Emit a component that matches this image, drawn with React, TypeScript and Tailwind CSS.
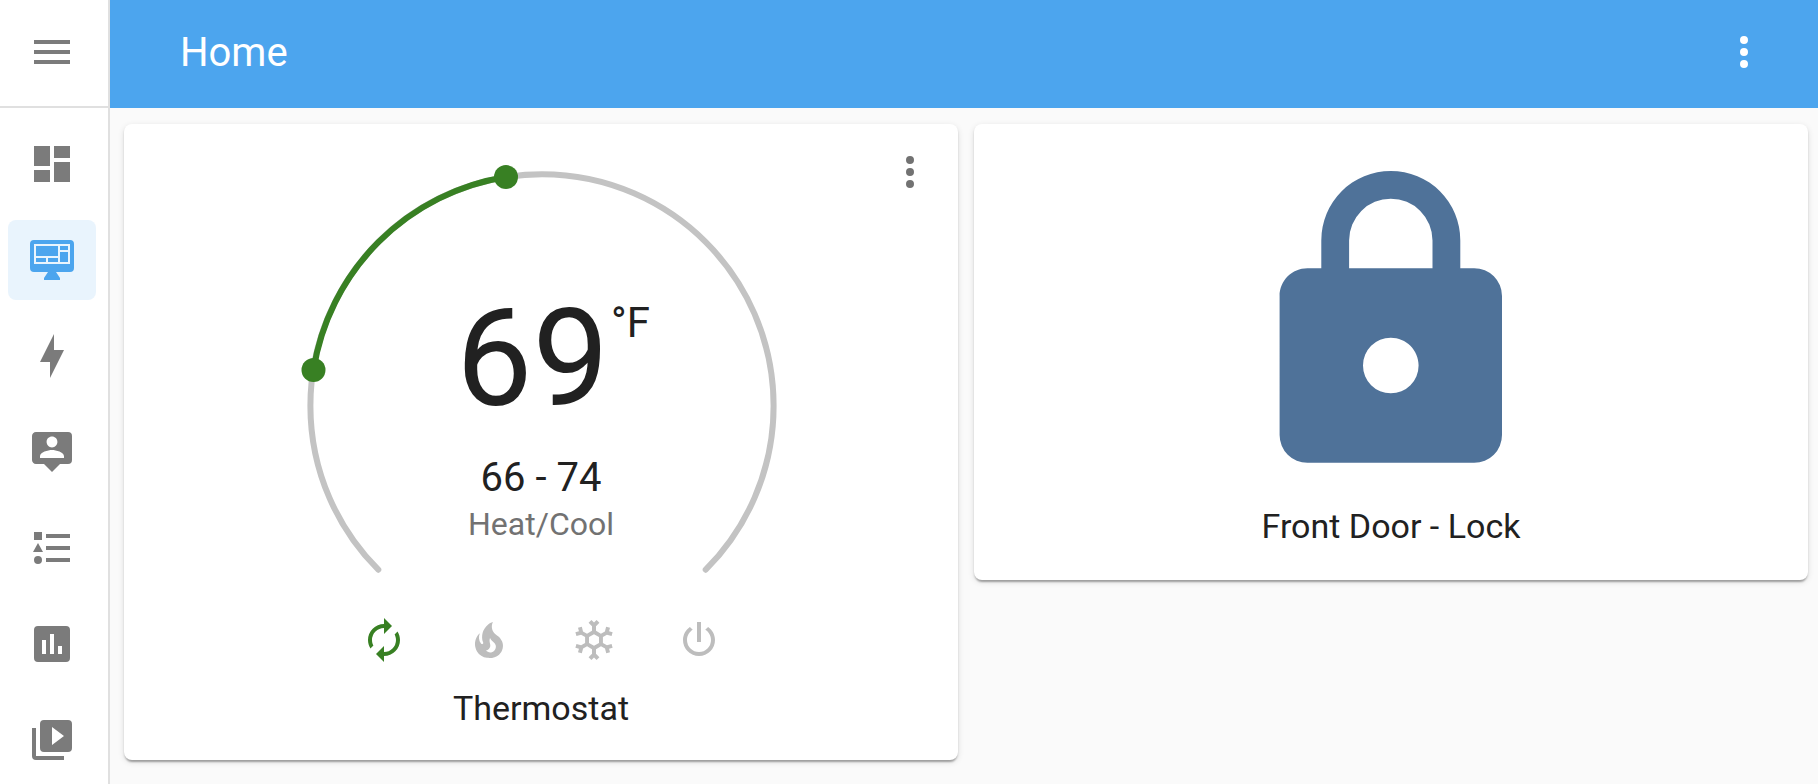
import type { ReactNode } from "react";

const paths = {
  menu: "M3,6H21V8H3V6M3,11H21V13H3V11M3,16H21V18H3V16Z",
  dots: "M12,16A2,2 0 0,1 14,18A2,2 0 0,1 12,20A2,2 0 0,1 10,18A2,2 0 0,1 12,16M12,10A2,2 0 0,1 14,12A2,2 0 0,1 12,14A2,2 0 0,1 10,12A2,2 0 0,1 12,10M12,4A2,2 0 0,1 14,6A2,2 0 0,1 12,8A2,2 0 0,1 10,6A2,2 0 0,1 12,4Z",
  dashboard: "M13,3V9H21V3M13,21H21V11H13M3,21H11V15H3M3,13H11V3H3V13Z",
  monitor:
    "M3,2H21A2,2 0 0,1 23,4V16A2,2 0 0,1 21,18H14L16,21V22H8V21L10,18H3A2,2 0 0,1 1,16V4A2,2 0 0,1 3,2M3,4V14H21V4H3M4,5H15V10H4V5M16,5H20V7H16V5M16,8H20V13H16V8M4,11H9V13H4V11M10,11H15V13H10V11Z",
  bolt: "M11 15H6L13 1V9H18L11 23V15Z",
  person:
    "M20,2A2,2 0 0,1 22,4V16A2,2 0 0,1 20,18H16L12,22L8,18H4C2.89,18 2,17.1 2,16V4C2,2.89 2.89,2 4,2H20M12,4.3C10.5,4.3 9.3,5.5 9.3,7C9.3,8.5 10.5,9.7 12,9.7C13.5,9.7 14.7,8.5 14.7,7C14.7,5.5 13.5,4.3 12,4.3M18,15V14.1C18,12.1 14,11 12,11C10,11 6,12.1 6,14.1V15H18Z",
  list: "M5,9.5L7.5,14H2.5L5,9.5M3,4H7V8H3V4M5,20A2,2 0 0,0 7,18A2,2 0 0,0 5,16A2,2 0 0,0 3,18A2,2 0 0,0 5,20M9,5V7H21V5H9M9,19H21V17H9V19M9,13H21V11H9V13Z",
  chart:
    "M5,3H19A2,2 0 0,1 21,5V19A2,2 0 0,1 19,21H5A2,2 0 0,1 3,19V5A2,2 0 0,1 5,3M7,10V17H9V10H7M11,7V17H13V7H11M15,13V17H17V13H15Z",
  media:
    "M4,6H2V20A2,2 0 0,0 4,22H18V20H4V6M20,2H8A2,2 0 0,0 6,4V16A2,2 0 0,0 8,18H20A2,2 0 0,0 22,16V4A2,2 0 0,0 20,2M12,14.5V5.5L18,10L12,14.5Z",
  auto: "M12,6V9L16,5L12,1V4A8,8 0 0,0 4,12C4,13.57 4.46,15.03 5.24,16.26L6.7,14.8C6.25,13.97 6,13 6,12A6,6 0 0,1 12,6M18.76,7.74L17.3,9.2C17.74,10.04 18,11 18,12A6,6 0 0,1 12,18V15L8,19L12,23V20A8,8 0 0,0 20,12C20,10.43 19.54,8.97 18.76,7.74Z",
  fire: "M17.66 11.2C17.43 10.9 17.15 10.64 16.89 10.38C16.22 9.78 15.46 9.35 14.82 8.72C13.33 7.26 13 4.85 13.95 3C13 3.23 12.17 3.75 11.46 4.32C8.87 6.4 7.85 10.07 9.07 13.22C9.11 13.32 9.15 13.42 9.15 13.55C9.15 13.77 9 13.97 8.8 14.05C8.57 14.15 8.33 14.09 8.14 13.93C8.08 13.88 8.04 13.83 8 13.76C6.87 12.33 6.69 10.28 7.45 8.64C5.78 10 4.87 12.3 5 14.47C5.06 14.97 5.12 15.47 5.29 15.97C5.43 16.57 5.7 17.17 6 17.7C7.08 19.43 8.95 20.67 10.96 20.92C13.1 21.19 15.39 20.8 17.03 19.32C18.86 17.66 19.5 15 18.56 12.72L18.43 12.46C18.22 12 17.66 11.2 17.66 11.2M14.5 17.5C14.22 17.74 13.76 18 13.4 18.1C12.28 18.5 11.16 17.94 10.5 17.28C11.69 17 12.4 16.12 12.61 15.23C12.78 14.43 12.46 13.77 12.33 13C12.21 12.26 12.23 11.63 12.5 10.94C12.69 11.32 12.89 11.7 13.13 12C13.9 13 15.11 13.44 15.37 14.8C15.41 14.94 15.43 15.08 15.43 15.23C15.46 16.05 15.1 16.95 14.5 17.5Z",
  snow: "M20.79,13.95L18.46,14.57L16.46,13.44V10.56L18.46,9.43L20.79,10.05L21.31,8.12L19.54,7.65L20,5.88L18.07,5.36L17.45,7.69L15.45,8.82L13,7.38V5.12L14.71,3.41L13.29,2L12,3.29L10.71,2L9.29,3.41L11,5.12V7.38L8.5,8.82L6.5,7.69L5.92,5.36L4,5.88L4.47,7.65L2.7,8.12L3.22,10.05L5.55,9.43L7.55,10.56V13.45L5.55,14.58L3.22,13.96L2.7,15.89L4.47,16.36L4,18.12L5.93,18.64L6.55,16.31L8.55,15.18L11,16.62V18.88L9.29,20.59L10.71,22L12,20.71L13.29,22L14.7,20.59L13,18.88V16.62L15.5,15.17L17.5,16.3L18.12,18.63L20,18.12L19.53,16.35L21.3,15.88L20.79,13.95M9.5,10.56L12,9.11L14.5,10.56V13.44L12,14.89L9.5,13.44V10.56Z",
  power:
    "M16.56,5.44L15.11,6.89C16.84,7.94 18,9.83 18,12A6,6 0 0,1 12,18A6,6 0 0,1 6,12C6,9.83 7.16,7.94 8.88,6.88L7.44,5.44C5.36,6.88 4,9.28 4,12A8,8 0 0,0 12,20A8,8 0 0,0 20,12C20,9.28 18.64,6.88 16.56,5.44M13,3H11V13H13",
  lock: "M12,17A2,2 0 0,0 14,15C14,13.89 13.1,13 12,13A2,2 0 0,0 10,15A2,2 0 0,0 12,17M18,8A2,2 0 0,1 20,10V20A2,2 0 0,1 18,22H6A2,2 0 0,1 4,20V10C4,8.89 4.9,8 6,8H7V6A5,5 0 0,1 12,1A5,5 0 0,1 17,6V8H18M12,3A3,3 0 0,0 9,6V8H15V6A3,3 0 0,0 12,3Z",
};

type IconName = keyof typeof paths;

function Icon({ name, className = "size-12" }: { name: IconName; className?: string }) {
  return (
    <svg viewBox="0 0 24 24" fill="currentColor" fillRule="evenodd" aria-hidden="true" className={className}>
      <path d={paths[name]} />
    </svg>
  );
}

const links: { icon: IconName; label: string; active?: boolean }[] = [
  { icon: "dashboard", label: "Overview" },
  { icon: "monitor", label: "Home", active: true },
  { icon: "bolt", label: "Energy" },
  { icon: "person", label: "Map" },
  { icon: "list", label: "Logbook" },
  { icon: "chart", label: "History" },
  { icon: "media", label: "Media" },
];

const modes: { icon: IconName; label: string; active?: boolean }[] = [
  { icon: "auto", label: "Heat/Cool", active: true },
  { icon: "fire", label: "Heat" },
  { icon: "snow", label: "Cool" },
  { icon: "power", label: "Off" },
];

function Sidebar() {
  return (
    <aside className="w-[110px] shrink-0 border-r-2 border-[#e0e0e0] bg-white text-[#7b7b7b]">
      <div className="flex h-[108px] items-center border-b-2 border-[#e0e0e0] pb-0.5 pl-7">
        <button type="button" aria-label="Toggle sidebar">
          <Icon name="menu" />
        </button>
      </div>
      <nav className="flex flex-col gap-4 py-4 pr-3 pl-2">
        {links.map((link) => (
          <a
            key={link.label}
            href="#"
            aria-label={link.label}
            className={
              link.active
                ? "flex h-20 items-center justify-center rounded-lg bg-[#e9f4fd] text-[#4ca5ee]"
                : "flex h-20 items-center justify-center rounded-lg"
            }
          >
            <Icon name={link.icon} />
          </a>
        ))}
      </nav>
    </aside>
  );
}

function Card({ children }: { children: ReactNode }) {
  return (
    <section className="relative flex flex-col items-center rounded-lg bg-white pb-8 shadow-[0_4px_2px_-2px_rgba(0,0,0,0.2),0_2px_2px_0_rgba(0,0,0,0.14),0_2px_6px_0_rgba(0,0,0,0.12)]">
      {children}
    </section>
  );
}

function Thermostat() {
  return (
    <Card>
      <button
        type="button"
        aria-label="More information"
        className="absolute top-0 right-0 flex size-24 items-center justify-center text-[#727272]"
      >
        <Icon name="dots" />
      </button>
      <div className="grid justify-items-center pt-10">
        <svg viewBox="0 0 480 416" fill="none" aria-hidden="true" className="col-start-1 row-start-1 h-[416px] w-[480px]">
          <path d="M77.3 405.7A231.6 231.6 0 1 1 404.7 405.7" stroke="#c3c3c3" strokeWidth="6" strokeLinecap="round" />
          <path d="M12.5 206A231.6 231.6 0 0 1 205 13" stroke="#388023" strokeWidth="6" />
          <circle cx="12.5" cy="206" r="12" fill="#388023" />
          <circle cx="205" cy="13" r="12" fill="#388023" />
        </svg>
        <div className="col-start-1 row-start-1 flex flex-col items-center pt-[127px]">
          <div className="flex items-start gap-0.5 pl-6">
            <span className="text-[136px] leading-[136px]">69</span>
            <span className="mt-3 text-[42px] leading-10">°F</span>
          </div>
          <div className="mt-7 text-[40px] leading-[46px]">66 - 74</div>
          <div className="text-[32px] leading-[46px] text-[#727272]">Heat/Cool</div>
        </div>
      </div>
      <div className="mt-9 flex gap-[57px]">
        {modes.map((mode) => (
          <button
            key={mode.label}
            type="button"
            aria-label={mode.label}
            className={mode.active ? "text-[#388023]" : "text-[#bdbdbd]"}
          >
            <Icon name={mode.icon} />
          </button>
        ))}
      </div>
      <h2 className="mt-6 text-[34px] leading-10">Thermostat</h2>
    </Card>
  );
}

function Lock() {
  return (
    <Card>
      <button type="button" aria-label="Toggle lock" className="flex w-full justify-center pt-[33px] text-[#4f7299]">
        <Icon name="lock" className="aspect-square w-2/5" />
      </button>
      <h2 className="mt-[15px] pb-0.5 text-[34px] leading-10">Front Door - Lock</h2>
    </Card>
  );
}

export default function App() {
  return (
    <div className="flex min-h-screen bg-[#fafafa] font-[Roboto,sans-serif] text-[#212121]">
      <Sidebar />
      <div className="min-w-0 flex-1">
        <header className="flex h-[108px] items-center justify-between bg-[#4ca5ee] pr-[50px] pb-1 pl-[70px] text-white">
          <h1 className="pt-0.5 text-[40px] leading-12">Home</h1>
          <button type="button" aria-label="Open menu">
            <Icon name="dots" />
          </button>
        </header>
        <main className="grid grid-cols-2 items-start gap-4 pt-4 pr-[10px] pb-4 pl-[14px]">
          <Thermostat />
          <Lock />
        </main>
      </div>
    </div>
  );
}
